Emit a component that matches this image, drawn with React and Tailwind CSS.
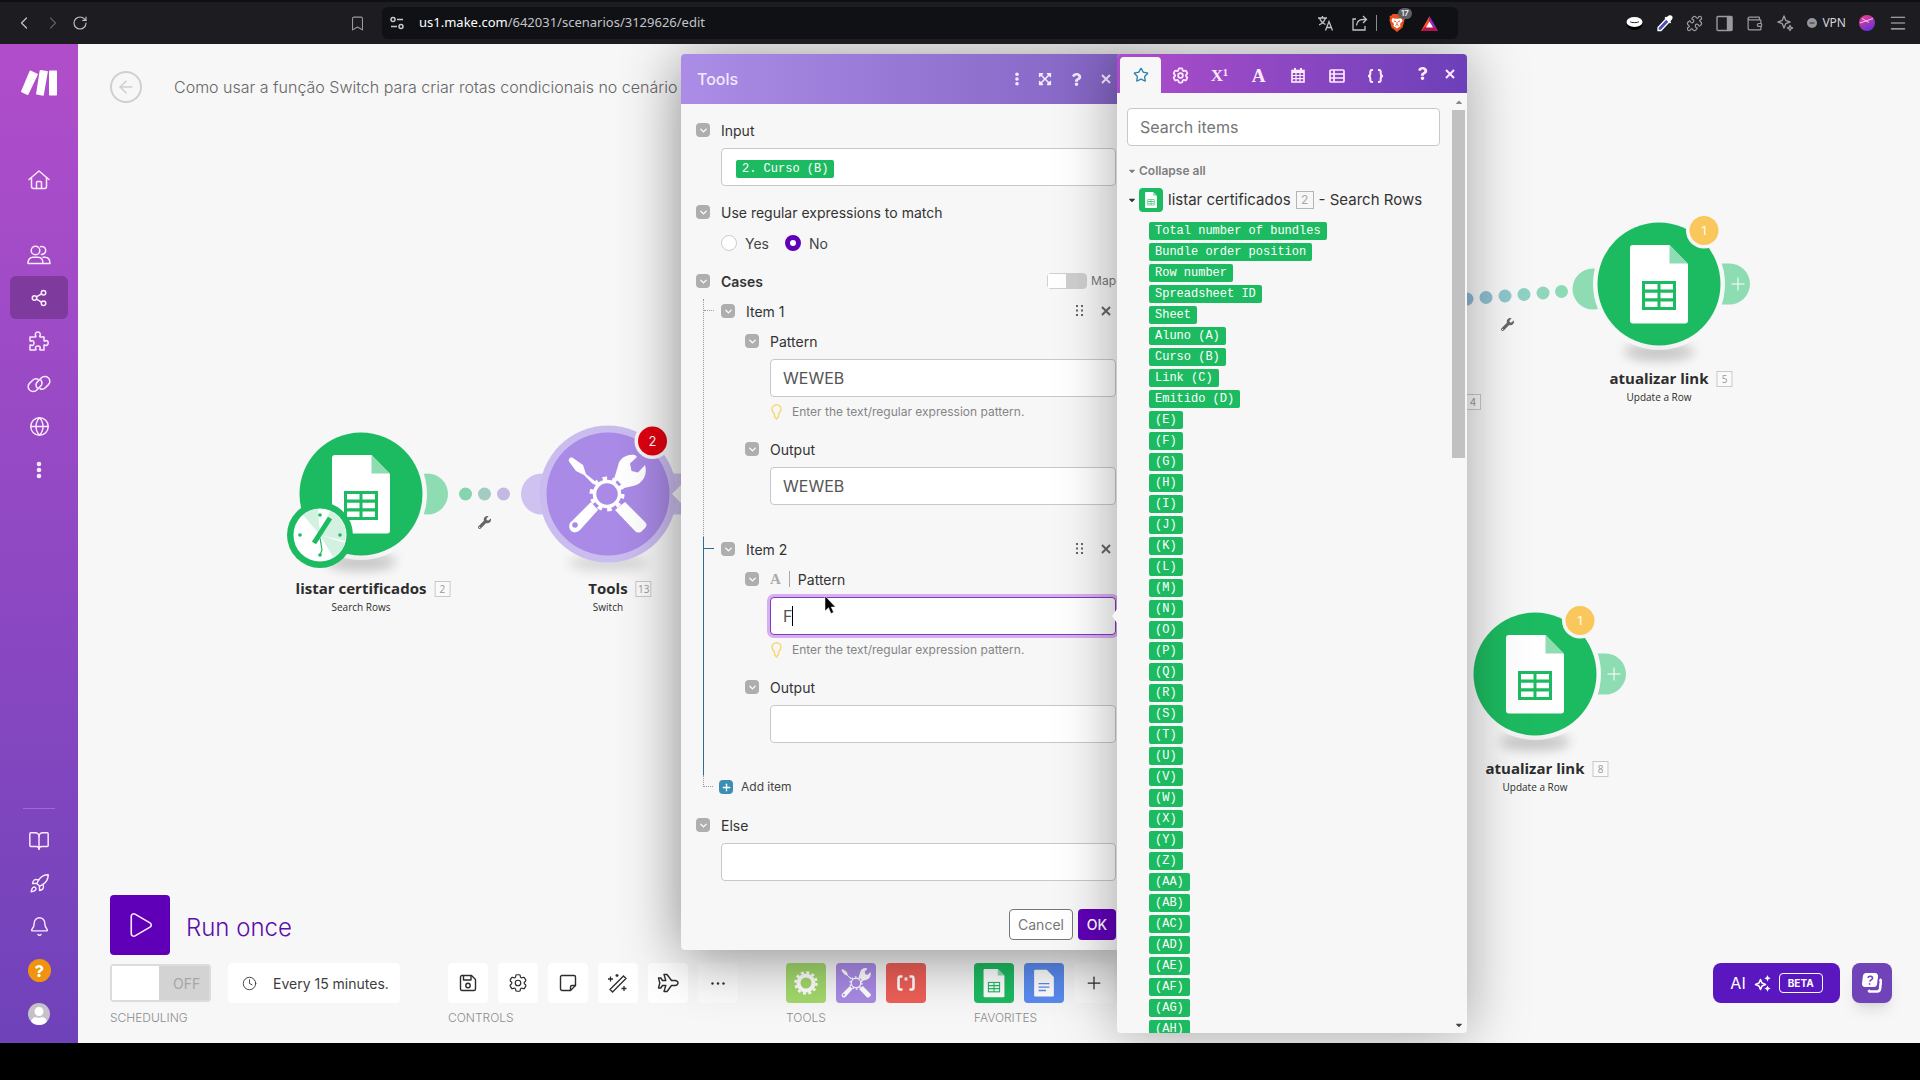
import {
  ArrowLeft,
  Bell,
  BookOpen,
  Bookmark,
  ChevronDown,
  ChevronLeft,
  ChevronRight,
  Clock,
  Globe,
  Menu,
  PanelRight,
  Plane,
  Play,
  Plus,
  Puzzle,
  Rocket,
  RotateCw,
  Share2,
  Star,
  Wallet,
} from "lucide-react";
import { FaWrench, FaQuestion, FaExpandArrowsAlt, FaCaretDown, FaCaretUp, FaUser } from "react-icons/fa";
import { HiOutlineCog6Tooth } from "react-icons/hi2";

// --- SHARED DATA ---
const letters = "EFGHIJKLMNOPQRSTUVWXYZ".split("").map((l) => `(${l})`);
const doubles = "ABCDEFGH".split("").map((l) => `(A${l})`);
const pills = [
  "Total number of bundles",
  "Bundle order position",
  "Row number",
  "Spreadsheet ID",
  "Sheet",
  "Aluno (A)",
  "Curso (B)",
  "Link (C)",
  "Emitido (D)",
  ...letters,
  ...doubles,
];

const nodeLabels = [
  { id: 2, x: 283, y: 450, title: "listar certificados", sub: "Search Rows" },
  { id: 13, x: 530, y: 450, title: "Tools", sub: "Switch" },
  { id: 5, x: 1581, y: 240, title: "atualizar link", sub: "Update a Row" },
  { id: 8, x: 1457, y: 630, title: "atualizar link", sub: "Update a Row" },
];

// --- DRAWN ICONS ---
const MakeLogo = () => (
  <svg width="36" height="26" viewBox="0 0 36 26" fill="#fff">
    <path d="M9.6.6l6.8 3.2a.8.8 0 0 1 .4 1L7.4 24.6a.8.8 0 0 1-1 .4L.5 22.2a.8.8 0 0 1-.4-1L8.6 1a.8.8 0 0 1 1-.4z" />
    <path d="M19.6 0l6.6 1a.8.8 0 0 1 .6.9l-4 23.2a.8.8 0 0 1-.9.6l-6.2-1.1a.8.8 0 0 1-.6-.9L18.7.6a.8.8 0 0 1 .9-.6z" />
    <rect x="28" y=".5" width="8" height="25" rx=".8" />
  </svg>
);

const HomeIcon = () => (
  <svg width="22" height="20" viewBox="0 0 22 20" fill="none" stroke="currentColor" strokeWidth="1.5" strokeLinecap="round" strokeLinejoin="round">
    <path d="M1 9.500L11 1l10 8.500M3.500 8v8.500A2 2 0 0 0 5.500 18.500h11a2 2 0 0 0 2-2V8" />
    <path d="M8.500 18.500v-6a1 1 0 0 1 1-1h3a1 1 0 0 1 1 1v6" />
  </svg>
);

const UsersIcon = () => (
  <svg width="24" height="20" viewBox="0 0 24 20" fill="none" stroke="currentColor" strokeWidth="1.5" strokeLinejoin="round">
    <circle cx="8.5" cy="5.5" r="4.3" />
    <path d="M1 18.5c0-4 2.200-6.300 5-6.300h5c2.800 0 5 2.300 5 6.300z" />
    <path d="M13 1.800a4 4 0 1 1 .8 7.500M15.500 12.200H18c2.900 0 5 2.300 5 6.300h-7" />
  </svg>
);

const ChainIcon = () => (
  <svg width="24" height="18" viewBox="0 0 24 18" fill="none" stroke="currentColor" strokeWidth="1.5" strokeLinecap="round">
    <path d="M10.200 13c-1.500-2-1.300-4.700.4-6.400L14.200 3C16 1.200 19.200 1 21.200 2.700c2.100 1.900 2.200 5 .3 6.900l-3.200 3.200c-1.400 1.400-3.500 1.800-5.200 1" />
    <path d="M13.800 5c1.500 2 1.300 4.700-.4 6.400L9.800 15c-1.800 1.800-5 2-7 .3-2.100-1.900-2.200-5-.3-6.900l3.200-3.200c1.400-1.400 3.500-1.800 5.200-1" />
  </svg>
);

const PuzzleIcon = () => (
  <svg width="20" height="20" viewBox="0 0 20 20" fill="none" stroke="currentColor" strokeWidth="1.5" strokeLinejoin="round">
    <path d="M1 6h5.200c.7 0 .9-.5.6-1C6 4 6 1 8.800 1s2.900 3 2 4c-.3.5 0 1 .6 1H15v3.500c0 .7.5.9 1 .6 1-.9 3.200-.6 3.200 1.900s-2.200 2.900-3.200 2c-.5-.4-1-.1-1 .5V19h-3.600c-.6 0-.9-.5-.6-1 .9-1 .8-3-1.900-3s-2.900 2-2 3c.3.5.1 1-.6 1H1v-4.500c0-.6.5-.9 1-.5 1 .9 3 .4 3-2s-2-2.800-3-1.900c-.5.3-1 .1-1-.6z" />
  </svg>
);

const DotsIcon = ({ className }) => (
  <svg width="6" height="18" viewBox="0 0 6 18" fill="currentColor" className={className}>
    <circle cx="3" cy="3" r="2.3" />
    <circle cx="3" cy="9" r="2.3" />
    <circle cx="3" cy="15" r="2.3" />
  </svg>
);

const CrossIcon = () => (
  <svg width="10" height="10" viewBox="0 0 10 10" stroke="currentColor" strokeWidth="2">
    <path d="M1 1l8 8M9 1L1 9" />
  </svg>
);

const GripIcon = () => (
  <svg width="8" height="12" viewBox="0 0 8 12" fill="currentColor">
    <path d="M0 0h2v2H0zM5 0h2v2H5zM0 4.500h2v2H0zM5 4.500h2v2H5zM0 9h2v2H0zM5 9h2v2H5z" />
  </svg>
);

const SheetShape = ({ fold = "#8edcb1", cell = "#1dbb61" }) => (
  <g>
    <path d="M-26-39h36.500L29-20v56.500a3 3 0 0 1-3 3h-52a3 3 0 0 1-3-3V-36a3 3 0 0 1 3-3z" fill="#fff" />
    <path d="M10.500-39L29-20.500H10.500z" fill={fold} />
    <rect x="-17" y="-3" width="34" height="29" fill={cell} />
    <path d="M-14 0h12.500v5.500H-14zM1.500 0H14v5.500H1.500zM-14 8.700h12.500v5.500H-14zM1.500 8.700H14v5.500H1.500zM-14 17.400h12.500v5.500H-14zM1.500 17.400H14v5.500H1.500z" fill="#fff" />
  </g>
);

const ToolsShape = ({ bg = "#a98ae6" }) => (
  <g>
    <path d="M-34-36l10 7 3 9 10 8-2.500 2.500-9.500-9.500-8-4-7-9.500c-1-2.500 1.500-5 4-3.500z" fill="#fff" />
    <path d="M7-15l4-13c1-7 8-12.500 17-11l2 2-7 6.500 1.500 7.500 6.500 1.500 7-7.500c3 9-2 19-12 21l-11 2.500z" fill="#fff" />
    <path d="M-16 8l7 8-18 20c-7 6-13-1-10-7z" fill="#fff" />
    <circle cx="-32" cy="31" r="2.8" fill={bg} />
    <path d="M8 16l10-8 20 20c2 2 2 4 0 6l-3 3c-2 2-5 2-7 0z" fill="#fff" />
    <circle r="17" fill={bg} />
    <circle r="12.5" fill="none" stroke="#fff" strokeWidth="3.5" />
    <circle r="15.5" fill="none" stroke="#fff" strokeWidth="4" strokeDasharray="4.5 5.239" />
  </g>
);

const AppShape = ({ size, scale, children }) => (
  <svg width={size} height={size} viewBox="-20 -20 40 40">
    <g transform={`scale(${scale})`}>{children}</g>
  </svg>
);

const Pointer = () => (
  <svg width="12" height="19" viewBox="0 0 12 19">
    <path d="M1 0v15l3.500-3.300L7 17.500l2.600-1.200L7.200 11H11.500z" fill="#000" stroke="#fff" strokeWidth=".5" />
  </svg>
);

// --- BROWSER BAR ---
const BrowserBar = () => (
  <header className="flex h-11 shrink-0 items-center border-t-2 border-[#0e0f13] bg-[#1c1c21] pr-3 text-[#9a9aa0]">
    <div className="flex w-[382px] items-center pl-3.5">
      <button aria-label="Back" className="w-[29px] text-[#c2c2c6]"><ChevronLeft size={20} strokeWidth={1.5} /></button>
      <button aria-label="Forward" className="w-[29px] text-[#5c5c62]"><ChevronRight size={20} strokeWidth={1.5} /></button>
      <button aria-label="Reload" className="text-[#c2c2c6]"><RotateCw size={16} strokeWidth={1.7} /></button>
      <button aria-label="Bookmark" className="mr-4 ml-auto"><Bookmark size={17} strokeWidth={1.5} /></button>
    </div>
    <div className="flex h-8 w-[1076px] items-center rounded-md bg-[#101115] pr-5 pl-2">
      <svg width="14" height="14" viewBox="0 0 14 14" fill="none" stroke="#c9c9cd" strokeWidth="1.5">
        <circle cx="3" cy="3.5" r="2" />
        <circle cx="11" cy="10.5" r="2" />
        <path d="M7 3.500h6M1 10.500h6" />
      </svg>
      <span className="ml-[15px] font-['Noto_Sans'] text-[13px] text-[#c4c4c8]">
        <span className="text-white">us1.make.com</span>/642031/scenarios/3129626/edit
      </span>
      <div className="ml-auto flex items-center text-[#c2c2c6]">
        <svg width="16" height="16" viewBox="0 0 16 16" fill="none" stroke="currentColor" strokeWidth="1.3" aria-label="Translate">
          <path d="M0 3h9M4.500 1v2M1.500 3c1 3 3 5 6 6.500M7.500 3c-1 3-3 5.500-6.500 7M7.500 15.500l3.500-9 3.500 9M8.700 12.500h4.600" />
        </svg>
        <button aria-label="Share" className="mr-2 ml-[18px]">
          <svg width="16" height="16" viewBox="0 0 16 16" fill="none" stroke="currentColor" strokeWidth="1.3">
            <path d="M4 4H1v11h12v-4M4.500 10.500c.5-4 3-6 6.500-6H14M11 1l3.500 3.500L11 8" />
          </svg>
        </button>
        <span className="h-4 w-px bg-[#8b8b90]" />
        <button aria-label="Shields" className="relative mr-4 ml-3">
          <svg width="16" height="18" viewBox="0 0 16 18">
            <path d="M3.500 0h9l1 1.500 2 .5-.5 2.500.7 1-2.200 8L8 18l-5.500-4.500L.3 5.500l.7-1L.5 2l2-.5z" fill="#e8511d" />
            <path d="M3.500 4l3 .7h3l3-.7 1 3-2.500 3 .5 2L8 14.500 4.500 12l.5-2-2.500-3z" fill="#fff" />
            <path d="M5 7l2 .8M11 7l-2 .8M8 8v2.500M6.500 11.500L8 10.500l1.500 1" stroke="#e8511d" fill="none" />
          </svg>
          <span className="absolute -top-1.5 left-[9px] rounded-full bg-[#5e5f66] px-[3px] text-[8px] leading-[11px] font-medium text-white">17</span>
        </button>
        <svg width="17" height="15" viewBox="0 0 17 15">
          <path d="M8.500 0L0 15h8.500z" fill="#ff4b24" />
          <path d="M8.500 0L17 15H8.500z" fill="#932bbf" />
          <path d="M0 15h17l-4-4H4z" fill="#b8124f" />
          <path d="M8.500 5.500l3.500 6H5z" fill="#fff" />
        </svg>
      </div>
    </div>
    <div className="ml-auto flex items-center gap-[13px]">
      <svg width="17" height="14" viewBox="0 0 17 14">
        <ellipse cx="8.5" cy="8" rx="8" ry="6" fill="#000" />
        <ellipse cx="8.5" cy="6" rx="8" ry="5" fill="#fff" />
        <path d="M4 5.500c1 1.500 8 1.500 9 0" stroke="#222" fill="none" />
      </svg>
      <svg width="17" height="17" viewBox="0 0 17 17">
        <path d="M10.500 3.500l3 3-8.500 9H2v-3z" fill="#4a4fb8" stroke="#fff" strokeWidth="1.3" />
        <path d="M8.500 3l5.500 5.500 1.200-1.200-1-1.300C17 4.500 17 2 16 1s-3.500-1-5 1L9.700 1.800z" fill="#fff" />
      </svg>
      <Puzzle size={17} strokeWidth={1.7} />
      <svg width="17" height="17" viewBox="0 0 17 17" fill="none" stroke="currentColor" strokeWidth="1.4">
        <rect x="1" y="1.5" width="15" height="14" rx="1" />
        <path d="M11.500 2h4v13h-4z" fill="currentColor" />
      </svg>
      <Wallet size={17} strokeWidth={1.7} />
      <svg width="18" height="18" viewBox="0 0 18 18" fill="none" stroke="currentColor" strokeWidth="1.4" strokeLinejoin="round">
        <path d="M8 2l1.700 4.300L14 8l-4.300 1.700L8 14 6.300 9.700 2 8l4.300-1.700zM14 11.500l.8 1.700 1.700.8-1.700.8-.8 1.700-.8-1.700-1.700-.8 1.700-.8z" />
      </svg>
      <button className="flex items-center gap-[5px] font-['Noto_Sans'] text-[12px] text-[#d6d6da]">
        <svg width="10" height="10" viewBox="0 0 10 10">
          <circle cx="5" cy="5" r="5" fill="#96969c" />
          <path d="M2.500 5h5" stroke="#44444a" strokeWidth="1.3" />
        </svg>
        VPN
      </button>
      <svg width="16" height="16" viewBox="0 0 16 16">
        <defs>
          <linearGradient id="orb" x1="0" y1="0" x2=".5" y2="1">
            <stop offset="0" stopColor="#ff3e86" />
            <stop offset="1" stopColor="#6a33d8" />
          </linearGradient>
        </defs>
        <circle cx="8" cy="8" r="8" fill="url(#orb)" />
        <path d="M1 8l13-4.500M3 3.500l7 4" stroke="#f7c6ee" fill="none" />
      </svg>
      <button aria-label="Menu" className="text-[#c2c2c6]"><Menu size={20} strokeWidth={1.3} /></button>
    </div>
  </header>
);

// --- SIDEBAR ---
const NavItem = ({ label, active, children }) => (
  <a
    href="#"
    aria-label={label}
    className={`flex h-[43px] w-[58px] items-center justify-center rounded-md text-[#fdeaff] ${active ? "bg-[#7f3a9e]" : ""}`}
  >
    {children}
  </a>
);

const Sidebar = () => (
  <nav className="flex w-[78px] shrink-0 flex-col items-center bg-gradient-to-b from-[#b14dcb] to-[#6f42ba] pt-[26px] pb-2">
    <MakeLogo />
    <div className="mt-[62px] mb-8">
      <NavItem label="Home"><HomeIcon /></NavItem>
    </div>
    <NavItem label="Team"><UsersIcon /></NavItem>
    <NavItem label="Scenarios" active><Share2 size={18} strokeWidth={2} /></NavItem>
    <NavItem label="Templates"><PuzzleIcon /></NavItem>
    <NavItem label="Connections"><ChainIcon /></NavItem>
    <NavItem label="Webhooks"><Globe size={21} strokeWidth={1.6} /></NavItem>
    <NavItem label="More"><DotsIcon /></NavItem>
    <div className="mt-auto mb-2.5 h-px w-8 bg-[#a06ad2]" />
    <NavItem label="Docs"><BookOpen size={22} strokeWidth={1.6} /></NavItem>
    <NavItem label="What's new"><Rocket size={21} strokeWidth={1.6} /></NavItem>
    <NavItem label="Notifications"><Bell size={21} strokeWidth={1.6} /></NavItem>
    <div className="pt-px">
      <NavItem label="Help">
        <span className="flex h-[23px] w-[23px] items-center justify-center rounded-full bg-[#f0930f] text-white"><FaQuestion size={12} /></span>
      </NavItem>
      <NavItem label="Profile">
        <span className="flex h-[22px] w-[22px] items-end justify-center overflow-hidden rounded-full bg-[#c4c2c8] text-white"><FaUser size={18} /></span>
      </NavItem>
    </div>
  </nav>
);

// --- CANVAS ---
const SheetNode = ({ x, y }) => (
  <g transform={`translate(${x} ${y})`}>
    <ellipse cx="0" cy="67" rx="36" ry="10" fill="#000" opacity=".14" filter="url(#soft)" />
    <circle r="66" fill="#f7f7f7" />
    <circle r="61.5" fill="#1dbb61" />
    <ellipse cx="0" cy="70" rx="34" ry="5" fill="#000" opacity=".08" filter="url(#soft)" />
    <SheetShape />
  </g>
);

const WarningBadge = ({ x, y }) => (
  <g transform={`translate(${x} ${y})`}>
    <circle r="18" fill="#f7f7f7" />
    <circle r="14.5" fill="#f9c75b" />
    <text textAnchor="middle" y="4" fontSize="12" fill="#fff" fontFamily="Inter">1</text>
  </g>
);

const AddPort = ({ x, y }) => (
  <g transform={`translate(${x} ${y})`}>
    <path d="M60-20.500h10.500a20.500 20.500 0 0 1 0 41H60z" fill="#8edcb1" />
    <path d="M72.500 0h13M79-6.500v13" stroke="#fff" />
  </g>
);

const Flow = () => (
  <svg className="absolute inset-0 h-full w-full" fill="none">
    <defs>
      <filter id="soft" x="-50%" y="-150%" width="200%" height="400%">
        <feGaussianBlur stdDeviation="6" />
      </filter>
    </defs>

    {/* listar certificados -> Tools */}
    <circle cx="349.5" cy="450" r="20.5" fill="#8edcb1" />
    <circle cx="387.5" cy="450" r="6.5" fill="#86d5b0" />
    <circle cx="406.5" cy="450" r="6.5" fill="#a3cbc2" />
    <circle cx="425.5" cy="450" r="6.5" fill="#c4b9e2" />
    <SheetNode x={283} y={450} />
    <g transform="translate(242 491)">
      <circle r="33" fill="#1dbb61" />
      <circle r="26.5" fill="#fff" />
      <path d="M0 0L-17-20A26 26 0 0 1-2-26zM0 0L25 8A26 26 0 0 1 13 22zM0 0L10-24A26 26 0 0 1 25 6z" fill="#d3f1e0" />
      <path d="M-6 8L10-17" stroke="#1dbb61" strokeWidth="5" />
      <path d="M0 3l2 12-2 5" stroke="#1dbb61" strokeWidth="1.2" />
      <circle cx="0" cy="-20" r="1.8" fill="#1dbb61" />
      <circle cx="0" cy="20" r="1.8" fill="#1dbb61" />
      <circle cx="-20" cy="0" r="1.8" fill="#1dbb61" />
      <circle cx="20" cy="0" r="1.8" fill="#1dbb61" />
    </g>

    {/* Tools */}
    <ellipse cx="530" cy="519" rx="40" ry="8" fill="#000" opacity=".13" filter="url(#soft)" />
    <circle cx="463.5" cy="450" r="20.5" fill="#cfc2f0" />
    <path d="M590 429.500h20v41h-20z" fill="#cfc2f0" />
    <circle cx="530" cy="450" r="68.5" fill="#cbbcf0" />
    <circle cx="530" cy="450" r="61.5" fill="#a98ae6" />
    <g transform="translate(529 450)"><ToolsShape /></g>
    <circle cx="574.5" cy="397" r="18" fill="#f7f7f7" />
    <circle cx="574.5" cy="397" r="14.5" fill="#e00010" />
    <text x="574.5" y="401.5" textAnchor="middle" fontSize="13" fill="#fff" fontFamily="Inter">2</text>
    <path d="M594 450l10-10v20z" fill="#f7f7f7" />

    {/* routes on the right side */}
    <circle cx="1389" cy="255" r="6.5" fill="#8db8d2" />
    <circle cx="1408" cy="253.5" r="6.5" fill="#8fbfd0" />
    <circle cx="1427" cy="252" r="6.5" fill="#8fc8cc" />
    <circle cx="1446" cy="250.5" r="6.5" fill="#8fd2c4" />
    <circle cx="1465" cy="249" r="6.5" fill="#8fd6bc" />
    <circle cx="1483.5" cy="247.5" r="6.5" fill="#8edab5" />
    <circle cx="1515" cy="245" r="20.5" fill="#8edcb1" />
    <AddPort x={1581} y={240} />
    <SheetNode x={1581} y={240} />
    <WarningBadge x={1626} y={186.5} />
    <AddPort x={1457} y={630} />
    <SheetNode x={1457} y={630} />
    <WarningBadge x={1502} y={576.5} />
  </svg>
);

const IdBox = ({ children }) => (
  <span className="flex h-4 min-w-4 items-center justify-center border border-[#c9c9c9] bg-[#fafafa] text-[10px] font-normal text-[#999]">
    {children}
  </span>
);

const NodeLabel = ({ node }) => (
  <div
    className="absolute flex -translate-x-1/2 flex-col items-center pt-[83px] font-['Open_Sans'] text-[#2d2d2d]"
    style={{ left: node.x, top: node.y }}
  >
    <div className="relative text-[15px] leading-[22px] font-bold whitespace-nowrap">
      {node.title}
      <span className="absolute top-1 left-full ml-2"><IdBox>{node.id}</IdBox></span>
    </div>
    <div className="mt-px text-[10px] leading-[14px] whitespace-nowrap">{node.sub}</div>
  </div>
);

// --- BOTTOM TOOLBAR ---
const ToolButton = ({ label, className = "bg-white", children }) => (
  <button aria-label={label} className={`flex h-10 w-10 items-center justify-center rounded text-[#2d2d2d] ${className}`}>
    {children}
  </button>
);

const ToolGroup = ({ title, children }) => (
  <div>
    <div className="flex gap-2.5">{children}</div>
    <div className="mt-1.5 text-[12px] leading-[18px] font-light text-[#8c8c8c]">{title}</div>
  </div>
);

const Toolbar = () => (
  <div className="flex items-start justify-between pr-7 pl-8">
    <div className="flex items-start gap-12">
      <ToolGroup title="SCHEDULING">
        <div className="flex h-10 w-[290px] items-center justify-between">
          <label className="relative flex h-[38px] w-[101px] items-center rounded border-2 border-[#dcdcdc] bg-[#d3d3d3] text-[14px] text-[#a6a6a6]">
            <input type="checkbox" className="absolute inset-0 h-full w-full appearance-none" />
            <span className="h-full w-[47px] bg-white" />
            <span className="ml-3.5">OFF</span>
          </label>
          <button className="flex h-10 w-[172px] items-center rounded bg-white pl-3.5 text-[14px] text-[#3d3d3d]">
            <Clock size={15} strokeWidth={1.5} className="mr-4" />
            Every 15 minutes.
          </button>
        </div>
      </ToolGroup>
      <ToolGroup title="CONTROLS">
        <ToolButton label="Save">
          <svg width="18" height="18" viewBox="0 0 18 18" fill="none" stroke="currentColor" strokeWidth="1.4" strokeLinejoin="round">
            <path d="M3 1.500h9.500l4 4V15a1.500 1.500 0 0 1-1.500 1.500H3A1.500 1.500 0 0 1 1.500 15V3A1.500 1.500 0 0 1 3 1.500z" />
            <path d="M4.500 1.500v4.500h7.500V1.500" />
            <circle cx="9" cy="11.5" r="2.2" />
          </svg>
        </ToolButton>
        <ToolButton label="Scenario settings"><HiOutlineCog6Tooth size={22} strokeWidth={1.3} /></ToolButton>
        <ToolButton label="Notes">
          <svg width="18" height="18" viewBox="0 0 18 18" fill="none" stroke="currentColor" strokeWidth="1.4" strokeLinejoin="round">
            <path d="M3 1.500h12A1.500 1.500 0 0 1 16.500 3v8.500l-5 5H3A1.500 1.500 0 0 1 1.500 15V3A1.500 1.500 0 0 1 3 1.500z" />
            <path d="M11.500 16.500V13a1.500 1.500 0 0 1 1.500-1.500h3.500" />
          </svg>
        </ToolButton>
        <ToolButton label="Auto-align">
          <svg width="20" height="20" viewBox="0 0 20 20" fill="none" stroke="currentColor" strokeWidth="1.3">
            <path d="M2 16.500L15.500 3l2.500 2.500L4.500 19zM2.500 3.500v5M0 6h5M16 13v5M13.500 15.500h5M9 1v3M7.500 2.500h3" />
          </svg>
        </ToolButton>
        <ToolButton label="Explain flow">
          <svg width="22" height="20" viewBox="0 0 22 20" fill="none" stroke="currentColor" strokeWidth="1.4" strokeLinejoin="round">
            <path d="M7 1.500h3l4.500 6H18c1.800 0 3 1.500 3 2.500s-1.200 2.500-3 2.500h-3.500l-4.500 6H7l1.800-6H5.500L3.800 15H1.500l1.300-5-1.300-5h2.300l1.700 2.500h3.300z" />
          </svg>
        </ToolButton>
        <ToolButton label="More controls" className="bg-white/50">
          <svg width="14" height="3" viewBox="0 0 14 3" fill="currentColor">
            <circle cx="1.5" cy="1.5" r="1.2" />
            <circle cx="7" cy="1.5" r="1.2" />
            <circle cx="12.5" cy="1.5" r="1.2" />
          </svg>
        </ToolButton>
      </ToolGroup>
      <ToolGroup title="TOOLS">
        <ToolButton label="Flow control" className="bg-[#a3d86c]">
          <svg width="26" height="26" viewBox="-13 -13 26 26" fill="none" stroke="#fff">
            <circle r="7.5" strokeWidth="4" />
            <circle r="10.5" strokeWidth="2.5" strokeDasharray="3 2.498" />
          </svg>
        </ToolButton>
        <ToolButton label="Tools" className="bg-[#a98ae6]">
          <AppShape size={40} scale=".38"><ToolsShape /></AppShape>
        </ToolButton>
        <ToolButton label="Text parser" className="bg-[#ee5f57]">
          <svg width="20" height="16" viewBox="0 0 20 16" fill="none" stroke="#fff" strokeWidth="2.6">
            <path d="M6.500 1.500H4C2.500 1.500 2.500 3 2.500 4v8c0 1 0 2.500 1.500 2.500h2.500M13.500 1.500H16c1.500 0 1.500 1.500 1.500 2.500v8c0 1 0 2.500-1.500 2.500h-2.500" />
            <path d="M10 2v4M8.300 3l3.400 2M11.700 3L8.300 5" strokeWidth="1" />
          </svg>
        </ToolButton>
      </ToolGroup>
      <ToolGroup title="FAVORITES">
        <ToolButton label="Google Sheets" className="bg-[#1dbb61]">
          <AppShape size={40} scale=".36"><SheetShape /></AppShape>
        </ToolButton>
        <ToolButton label="Google Docs" className="bg-[#5a8cf0]">
          <AppShape size={40} scale=".34">
            <path d="M-26-39h34L29-18v54.500a3 3 0 0 1-3 3h-52a3 3 0 0 1-3-3V-36a3 3 0 0 1 3-3z" fill="#fff" />
            <path d="M-16 2h32M-16 12h32M-16 22h22" stroke="#5a8cf0" strokeWidth="4" />
          </AppShape>
        </ToolButton>
        <ToolButton label="Add favorite" className="bg-white/50"><Plus size={20} strokeWidth={1.5} /></ToolButton>
      </ToolGroup>
    </div>
    <div className="flex gap-3">
      <button className="flex h-10 w-[127px] items-center justify-center gap-2 rounded-lg bg-[#5a17c0] text-[16px] text-white">
        AI
        <svg width="17" height="17" viewBox="0 0 17 17" fill="#fff">
          <path d="M6.500 4.500L8 8l3.500 1.500L8 11l-1.500 3.500L5 11 1.500 9.500 5 8z" fill="none" stroke="#fff" strokeWidth="1.6" strokeLinejoin="round" />
          <path d="M13.500 0l1 2.200 2.200 1-2.200 1-1 2.200-1-2.200-2.200-1 2.200-1zM13.500 10.500l1 2.100 2.100 1-2.100 1-1 2.100-1-2.100-2.100-1 2.100-1z" />
        </svg>
        <span className="rounded-sm border border-white px-2 text-[10px] leading-[18px] font-bold">BETA</span>
      </button>
      <button aria-label="Help center" className="flex h-10 w-10 items-center justify-center rounded-lg bg-[#7043b8] text-white shadow-lg">
        <svg width="20" height="20" viewBox="0 0 20 20" fill="none">
          <path d="M17.500 6.500l1.500.8-1 8.700a3 3 0 0 1-3 2.500H7.500l-1-1.500" stroke="#fff" strokeWidth="2.6" strokeLinejoin="round" />
          <path d="M4 0h9a3 3 0 0 1 3 3.500l-1 8a3 3 0 0 1-3 2.500H3a3 3 0 0 1-3-3.500l1-8A3 3 0 0 1 4 0z" fill="#fff" />
          <path d="M6 5c.3-2.500 5-2.200 4.500.3C10.200 7 8 6.800 7.800 8.700M7.600 10.300v1.400" stroke="#7043b8" strokeWidth="1.6" />
        </svg>
      </button>
    </div>
  </div>
);

// --- TOOLS MODULE DIALOG ---
const Toggle = () => (
  <span className="flex h-3.5 w-3.5 shrink-0 items-center justify-center rounded-sm bg-[#aeaeae] text-white">
    <ChevronDown size={11} strokeWidth={3} />
  </span>
);

const FieldLabel = ({ htmlFor, children, className = "" }) => (
  <div className="flex h-6 items-center gap-[11px]">
    <Toggle />
    <label htmlFor={htmlFor} className={`flex items-center text-[14px] text-[#333] ${className}`}>{children}</label>
  </div>
);

const boxStyle = "block h-[38px] w-full rounded border bg-white px-3 text-[16px] text-[#555] outline-none";

const TextField = ({ id, label, value = "", hint, focused }) => (
  <div>
    <FieldLabel htmlFor={id}>
      {focused && <span className="mr-2 border-r border-[#aaa] pr-2 font-['Liberation_Serif'] text-[15px] leading-4 font-bold text-[#aaa]">A</span>}
      {label}
    </FieldLabel>
    <div className="relative mt-1.5 ml-[25px]">
      <input
        id={id}
        type="text"
        defaultValue={value}
        className={`${boxStyle} ${focused ? "border-[#8338c9] ring-3 ring-[#d6b0ee]" : "border-[#c8c8c8]"}`}
      />
      {focused && <span className="absolute top-[9px] left-[22px] h-5 w-px bg-black" />}
    </div>
    {hint && (
      <div className="mt-1.5 ml-6 flex h-[18px] items-center gap-2.5 pl-0.5 text-[12px] text-[#858585]">
        <svg width="11" height="16" viewBox="0 0 11 16" fill="none" stroke="#f7d774" strokeWidth="1.5">
          <path d="M3.500 12.500V10C2 8.500 1 7.300 1 5.300a4.500 4.500 0 0 1 9 0c0 2-1 3.200-2.500 4.700v2.500L5.500 15z" />
        </svg>
        {hint}
      </div>
    )}
  </div>
);

const CaseItem = ({ n, value, active }) => (
  <div className={`border-l pb-8 pl-[17px] ${active ? "border-[#2f6d8f]" : "border-dotted border-[#999]"}`}>
    <div className="flex items-center justify-between">
      <div className="relative">
        <span className={`absolute top-[11px] -left-[17px] w-2.5 border-t ${active ? "border-[#2f6d8f]" : "border-dotted border-[#999]"}`} />
        <FieldLabel>Item {n}</FieldLabel>
      </div>
      <div className="flex items-center gap-[17px] pr-[5px] text-[#666]">
        <button type="button" aria-label="Reorder item"><GripIcon /></button>
        <button type="button" aria-label="Remove item"><CrossIcon /></button>
      </div>
    </div>
    <div className="mt-1.5 flex flex-col gap-4 pl-6">
      <TextField
        id={`pattern-${n}`}
        label="Pattern"
        value={active ? "F" : value}
        focused={active}
        hint="Enter the text/regular expression pattern."
      />
      <TextField id={`output-${n}`} label="Output" value={value} />
    </div>
  </div>
);

const ToolsDialog = () => (
  <section className="w-[450px] rounded bg-[#f7f7f7] shadow-[0_6px_60px_rgba(0,0,0,0.45)]">
    <div className="flex h-[50px] items-center rounded-t bg-gradient-to-r from-[#ab8ce6] to-[#8263c2] pr-5 pl-4 text-[#f2eaff]">
      <h2 className="text-[16px] font-medium">Tools</h2>
      <div className="ml-auto flex items-center gap-[18px]">
        <button aria-label="Options"><DotsIcon className="h-3.5" /></button>
        <button aria-label="Expand"><FaExpandArrowsAlt size={14} /></button>
        <button aria-label="Help"><FaQuestion size={13} /></button>
        <button aria-label="Close"><CrossIcon /></button>
      </div>
    </div>
    <form className="pt-3.5 pr-[15px] pb-2.5 pl-[15px]">
      <FieldLabel>Input</FieldLabel>
      <div className="mt-1.5 ml-[25px] flex h-[38px] items-center rounded border border-[#c8c8c8] bg-white px-3.5 pt-1">
        <Pill>2. Curso (B)</Pill>
      </div>
      <div className="mt-3.5">
        <FieldLabel>Use regular expressions to match</FieldLabel>
        <div className="mt-[7px] ml-[25px] flex h-6 items-center gap-6 text-[14px] text-[#444]">
          <label className="flex items-center gap-2">
            <input type="radio" name="regex" className="h-4 w-4 appearance-none rounded-full border border-[#ccc] bg-white" />
            Yes
          </label>
          <label className="-ml-2 flex items-center gap-2">
            <input type="radio" name="regex" defaultChecked className="h-4 w-4 appearance-none rounded-full border-[5px] border-[#5f00b8] bg-white" />
            No
          </label>
        </div>
      </div>
      <div className="mt-3.5 flex items-center justify-between">
        <FieldLabel className="font-semibold">Cases</FieldLabel>
        <label className="flex items-center gap-1 text-[12px] text-[#777]">
          <span className="flex h-4 w-10 rounded-sm border border-[#d0d0d0] bg-[#cfcfcf]">
            <input type="checkbox" className="h-full w-4.5 appearance-none bg-white" />
          </span>
          Map
        </label>
      </div>
      <div className="ml-[7px] pt-1.5">
        <CaseItem n={1} value="WEWEB" />
        <CaseItem n={2} value="" active />
        <div className="relative flex h-6 items-center pl-4">
          <span className="absolute top-0 left-0 h-3 w-2.5 border-b border-l border-dotted border-[#999]" />
          <button type="button" className="flex items-center gap-2 text-[12px] text-[#444]">
            <span className="flex h-3.5 w-3.5 items-center justify-center rounded-sm bg-[#3b8fb5] text-white"><Plus size={11} strokeWidth={3} /></span>
            Add item
          </button>
        </div>
      </div>
      <div className="mt-3.5">
        <TextField id="else" label="Else" />
      </div>
      <div className="mt-7 flex justify-end gap-[5px] text-[14px]">
        <button type="button" className="h-[31px] w-16 rounded-sm border border-[#777] bg-white text-[#777]">Cancel</button>
        <button type="button" className="h-[31px] w-[38px] rounded-sm bg-[#5f00b8] font-medium text-white">OK</button>
      </div>
    </form>
  </section>
);

// --- MAPPING PANEL ---
const Pill = ({ children }) => (
  <button
    type="button"
    className="h-[18px] shrink-0 rounded-xs bg-[#1dbb61] px-1.5 font-['Liberation_Mono'] text-[12px] leading-[18px] whitespace-nowrap text-white"
  >
    {children}
  </button>
);

const panelTabs = [
  { name: "General functions", icon: <HiOutlineCog6Tooth size={19} strokeWidth={2.2} /> },
  {
    name: "Math functions",
    icon: <span className="font-['Liberation_Serif'] text-[17px] leading-4 font-bold">X¹</span>,
  },
  {
    name: "Text functions",
    icon: <span className="font-['Liberation_Serif'] text-[19px] leading-4 font-bold">A</span>,
  },
  {
    name: "Date functions",
    icon: (
      <svg width="14" height="15" viewBox="0 0 14 15" fill="none" stroke="currentColor">
        <rect x="1" y="2.5" width="12" height="11.5" strokeWidth="1.6" />
        <path d="M1 4h12" strokeWidth="2" />
        <path d="M1 7.500h12M1 10.700h12M5 4v10M9 4v10" strokeWidth="1.2" />
        <path d="M4 0v3M10 0v3" strokeWidth="2" />
      </svg>
    ),
  },
  {
    name: "Array functions",
    icon: (
      <svg width="16" height="14" viewBox="0 0 16 14" fill="none" stroke="currentColor" strokeWidth="1.7">
        <rect x="1" y="1" width="14" height="12" rx="1" />
        <path d="M1 5h14M1 9h14M5 1v12" />
      </svg>
    ),
  },
  {
    name: "Custom variables",
    icon: (
      <svg width="17" height="14" viewBox="0 0 17 14" fill="none" stroke="currentColor" strokeWidth="2">
        <path d="M6 1H5C3.500 1 3.300 2 3.300 3v1.500C3.300 6 2.500 7 1 7c1.500 0 2.300 1 2.300 2.500V11c0 1 .2 2 1.700 2h1M11 1h1c1.500 0 1.700 1 1.700 2v1.500c0 1.500.8 2.500 2.300 2.500-1.500 0-2.300 1-2.300 2.500V11c0 1-.2 2-1.700 2h-1" />
      </svg>
    ),
  },
];

const MappingPanel = () => (
  <section className="relative -ml-[14px] flex w-[350px] flex-col self-stretch rounded bg-[#f7f7f7] shadow-[0_0_60px_rgba(0,0,0,0.35)]">
    <svg width="5" height="14" viewBox="0 0 5 14" className="absolute top-[555px] -left-[5px]">
      <path d="M5 0v14L0 7z" fill="#f7f7f7" />
    </svg>
    <div className="flex h-[39px] shrink-0 items-stretch rounded-t bg-gradient-to-r from-[#ad4cca] to-[#6c40b9] pl-[3px] text-[#ffeaff]">
      <button aria-label="Items" className="mt-[3px] flex w-[41px] items-center justify-center rounded-t bg-[#f7f7f7] text-[#2c84a8]">
        <Star size={16} strokeWidth={2} />
      </button>
      {panelTabs.map((t) => (
        <button key={t.name} aria-label={t.name} className="flex w-[39px] items-center justify-center pt-1">
          {t.icon}
        </button>
      ))}
      <div className="mr-3 ml-auto flex items-center gap-4">
        <button aria-label="Help"><FaQuestion size={13} /></button>
        <button aria-label="Close"><CrossIcon /></button>
      </div>
    </div>
    <div className="flex min-h-0 flex-1">
      <div className="flex min-w-0 flex-1 flex-col overflow-hidden pt-[15px] pr-3 pl-2.5">
        <input
          type="search"
          aria-label="Search items"
          placeholder="Search items"
          className="h-[38px] w-full shrink-0 rounded border border-[#c8c8c8] bg-white px-3 text-[16px] placeholder:text-[#757575]"
        />
        <button className="mt-4 flex h-[18px] shrink-0 items-center gap-0.5 text-[12px] font-semibold text-[#808080]">
          <FaCaretDown size={10} />
          Collapse all
        </button>
        <div className="mt-2 flex h-6 shrink-0 items-center gap-[5px] text-[15px] whitespace-nowrap text-[#333]">
          <FaCaretDown size={10} className="-mr-[3px] shrink-0" />
          <span className="flex h-6 w-6 shrink-0 items-center justify-center rounded-sm bg-[#1dbb61]">
            <AppShape size={24} scale=".34"><SheetShape /></AppShape>
          </span>
          listar certificados
          <span className="flex h-[18px] w-[18px] items-center justify-center border border-[#b5b5b5] text-[12px] text-[#aaa]">2</span>
          - Search Rows
        </div>
        <div className="mt-2.5 flex min-h-0 flex-1 flex-col items-start gap-[3px] overflow-hidden pl-[22px]">
          {pills.map((p) => (
            <Pill key={p}>{p}</Pill>
          ))}
        </div>
      </div>
      <div className="mr-0.5 flex w-[13px] flex-col items-center text-[#8a8a8a]">
        <span className="flex h-[17px] items-center"><FaCaretUp size={10} /></span>
        <span className="h-[348px] w-full bg-[#c1c1c1]" />
        <span className="mt-auto flex h-[17px] items-center text-[#444]"><FaCaretDown size={10} /></span>
      </div>
    </div>
  </section>
);

// --- PAGE ---
export default function App() {
  return (
    <div className="flex h-screen flex-col overflow-hidden bg-black font-[Inter,sans-serif]">
      <BrowserBar />
      <div className="flex min-h-0 flex-1">
        <Sidebar />
        <main className="relative flex min-w-0 flex-1 flex-col overflow-hidden bg-[#f7f7f7]">
          <Flow />
          {nodeLabels.map((n) => (
            <NodeLabel key={n.id} node={n} />
          ))}
          <FaWrench size={13} className="absolute top-[472px] left-[400px] text-[#666]" />
          <FaWrench size={13} className="absolute top-[274px] left-[1423px] text-[#666]" />
          <span className="absolute top-[350px] left-[1387px]"><IdBox>4</IdBox></span>

          <div className="relative flex items-center gap-8 pt-[27px] pl-8">
            <button aria-label="Go back" className="flex h-8 w-8 items-center justify-center rounded-full border-2 border-[#cfcfcf] text-[#cfcfcf]">
              <ArrowLeft size={20} strokeWidth={1.8} />
            </button>
            <h1 className="text-[16px] font-light text-[#666]">Como usar a função Switch para criar rotas condicionais no cenário</h1>
          </div>

          <div className="relative mt-auto pb-4">
            <button className="mb-2 ml-8 flex items-center gap-4 text-[24px] font-light text-[#5b0dad]">
              <span className="flex h-[60px] w-[60px] items-center justify-center rounded bg-[#5f00b8] text-[#ffeaff]">
                <Play size={30} strokeWidth={1.3} />
              </span>
              <span className="pt-1.5">Run once</span>
            </button>
            <Toolbar />
          </div>

          <div className="absolute top-2.5 bottom-2.5 left-[603px] flex items-start">
            <ToolsDialog />
            <MappingPanel />
          </div>
          <span className="absolute top-[552px] left-[746px]"><Pointer /></span>
        </main>
      </div>
      <footer className="h-[37px] shrink-0 bg-black" />
    </div>
  );
}
